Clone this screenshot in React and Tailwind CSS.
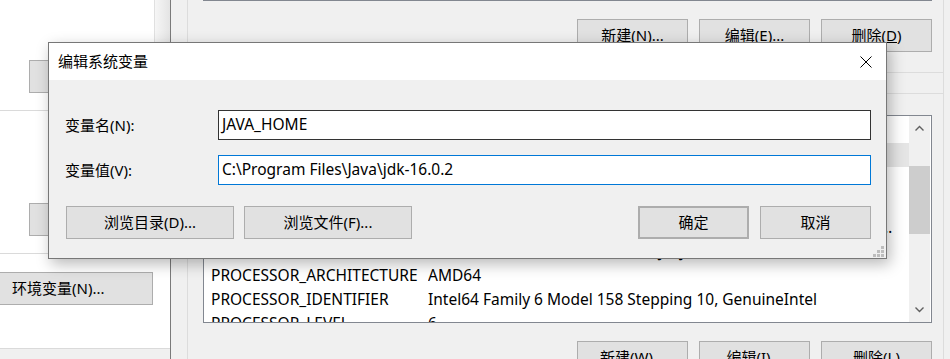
import React from "react";

const rows = [
  { name: "JAVA_HOME", value: "C:\\Program Files\\Java\\jdk-16.0.2", selected: true },
  { name: "NUMBER_OF_PROCESSORS", value: "12" },
  { name: "OS", value: "Windows_NT" },
  {
    name: "Path",
    value:
      "C:\\Program Files\\Common Files\\Oracle\\Java\\javapath;C:\\WINDOWS\\system32;C:\\WINDOWS;C:\\WINDOWS\\System32\\Wbem;C:\\WINDOWS\\System32\\WindowsPowerShell\\v1.0\\",
  },
  { name: "PATHEXT", value: ".COM;.EXE;.BAT;.CMD;.VBS;.VBE;.JS;.JSE;.WSF;.WSH;.MSC" },
  { name: "PROCESSOR_ARCHITECTURE", value: "AMD64" },
  { name: "PROCESSOR_IDENTIFIER", value: "Intel64 Family 6 Model 158 Stepping 10, GenuineIntel" },
  { name: "PROCESSOR_LEVEL", value: "6" },
];

const Btn = ({ className = "", children }) => (
  <div
    className={`flex items-center justify-center h-[33px] bg-[#e1e1e1] border border-[#adadad] text-[15px] text-black shrink-0 ${className}`}
  >
    {children}
  </div>
);

const Chevron = ({ up }) => (
  <svg width="9" height="6" viewBox="0 0 9 6">
    <polyline
      points={up ? "0.5,5.5 4.5,1.5 8.5,5.5" : "0.5,0.5 4.5,4.5 8.5,0.5"}
      fill="none"
      stroke="#606060"
      strokeWidth="1.4"
    />
  </svg>
);

export default function App() {
  return (
    <div className="relative w-[950px] h-[359px] overflow-hidden flex bg-white font-['Noto_Sans','Noto_Sans_CJK_SC',sans-serif] text-black">
      {/* System properties window (behind) */}
      <div className="relative w-[170px] shrink-0 h-full flex flex-col bg-white">
        <div className="absolute left-[154px] top-0 w-[16px] h-[110px] border-l border-[#e0e0e0] bg-gradient-to-r from-[#f6f6f6] to-[#e4e4e4]" />
        <Btn className="mt-[60px] ml-[29px] w-[130px]" />
        <div className="mt-[17px] h-px bg-[#dadada]" />
        <Btn className="mt-[92px] ml-[29px] w-[130px]" />
        <div className="mt-[17px] h-px bg-[#dadada]" />
        <Btn className="mt-[18px] w-[153px] border-l-0 !justify-start pl-[12px]">环境变量(N)...</Btn>
        <div className="mt-[43px] h-px bg-[#dadada]" />
        <div className="flex-1 bg-[#f0f0f0]" />
      </div>

      {/* Environment variables window */}
      <div className="flex-1 min-w-0 h-full overflow-hidden border-l border-[#7a7a7a] bg-[#f0f0f0] pl-[16px] pr-[6px]">
        <div className="h-full border-x border-[#dcdcdc] flex flex-col">
          {/* user variables section */}
          <div className="h-[73px] border-b border-[#dcdcdc] shrink-0">
            <div className="ml-[15px] mr-[11px] h-px bg-[#828790]" />
            <div className="mt-[18px] flex justify-end gap-[11px] pr-[11px]">
              <Btn className="w-[111px]">
                新建(<span className="underline">N</span>)...
              </Btn>
              <Btn className="w-[111px]">
                编辑(<span className="underline">E</span>)...
              </Btn>
              <Btn className="w-[111px]">
                删除(<span className="underline">D</span>)
              </Btn>
            </div>
          </div>

          {/* system variables section */}
          <div className="mt-[20px] border-t border-[#dcdcdc] pt-[21px] flex-1 min-h-0">
            <div className="ml-[15px] mr-[11px] h-[208px] border border-[#828790] bg-white flex overflow-hidden">
              <div className="flex-1 min-w-0 flex flex-col text-[15.5px] overflow-hidden">
                <div className="h-[27px] shrink-0 flex items-center bg-white">
                  <div className="w-[224px] pl-[7px]">变量</div>
                  <div>值</div>
                </div>
                {rows.map((r) => (
                  <div
                    key={r.name}
                    className={`h-[24px] shrink-0 flex items-center pt-px ${r.selected ? "bg-[#e5e5e5]" : ""}`}
                  >
                    <div className="w-[224px] shrink-0 pl-[7px] whitespace-nowrap">{r.name}</div>
                    <div className="flex-1 min-w-0 pr-[14px] whitespace-nowrap overflow-hidden text-ellipsis">
                      {r.value}
                    </div>
                  </div>
                ))}
              </div>
              <div className="w-[21px] mr-px shrink-0 bg-[#f0f0f0] flex flex-col items-center">
                <div className="h-[24px] shrink-0 w-full flex items-center justify-center">
                  <Chevron up />
                </div>
                <div className="mt-[26px] h-[68px] shrink-0 w-full bg-[#cdcdcd]" />
                <div className="flex-1" />
                <div className="h-[24px] shrink-0 w-full flex items-center justify-center">
                  <Chevron />
                </div>
              </div>
            </div>
            <div className="mt-[18px] flex justify-end gap-[11px] pr-[11px]">
              <Btn className="w-[111px]">新建(W)...</Btn>
              <Btn className="w-[111px]">编辑(I)...</Btn>
              <Btn className="w-[111px]">删除(L)</Btn>
            </div>
          </div>
        </div>
      </div>

      {/* Edit system variable dialog */}
      <div className="absolute left-[48px] top-[42px] w-[839px] h-[217px] border border-[#777777] bg-[#f0f0f0] flex flex-col shadow-[3px_5px_14px_rgba(0,0,0,0.28)]">
        <div className="h-[37px] shrink-0 bg-white flex items-center justify-between pl-[9px] pr-[14px]">
          <span className="text-[15px]">编辑系统变量</span>
          <svg width="12" height="12" viewBox="0 0 12 12">
            <path d="M0.5 0.5 L11.5 11.5 M11.5 0.5 L0.5 11.5" stroke="#000" strokeWidth="1" />
          </svg>
        </div>
        <div className="relative flex-1 flex flex-col pl-[16px] pr-[15px] pt-[30px] text-[15px]">
          <div className="flex items-center h-[30px]">
            <div className="w-[153px] shrink-0">变量名(N):</div>
            <div className="flex-1 h-full bg-white border border-[#333333] flex items-center pl-[3px] text-[15.5px]">
              JAVA_HOME
            </div>
          </div>
          <div className="mt-[15px] flex items-center h-[30px]">
            <div className="w-[153px] shrink-0">变量值(V):</div>
            <div className="flex-1 h-full bg-white border border-[#0078d7] flex items-center pl-[3px] text-[15.5px]">
              C:\Program Files\Java\jdk-16.0.2
            </div>
          </div>
          <div className="mt-[21px] flex items-center pl-px">
            <Btn className="w-[168px]">浏览目录(D)...</Btn>
            <Btn className="ml-[10px] w-[168px]">浏览文件(F)...</Btn>
            <div className="flex-1" />
            <Btn className="w-[111px] border-2 border-[#0078d7]">确定</Btn>
            <Btn className="ml-[11px] w-[111px]">取消</Btn>
          </div>
          <svg
            className="absolute right-[2px] bottom-[1px]"
            width="11"
            height="11"
            viewBox="0 0 11 11"
          >
            <rect x="8" y="0" width="3" height="3" fill="#bdbdbd" />
            <rect x="4" y="4" width="3" height="3" fill="#bdbdbd" />
            <rect x="8" y="4" width="3" height="3" fill="#bdbdbd" />
            <rect x="0" y="8" width="3" height="3" fill="#bdbdbd" />
            <rect x="4" y="8" width="3" height="3" fill="#bdbdbd" />
            <rect x="8" y="8" width="3" height="3" fill="#bdbdbd" />
          </svg>
        </div>
      </div>
    </div>
  );
}
